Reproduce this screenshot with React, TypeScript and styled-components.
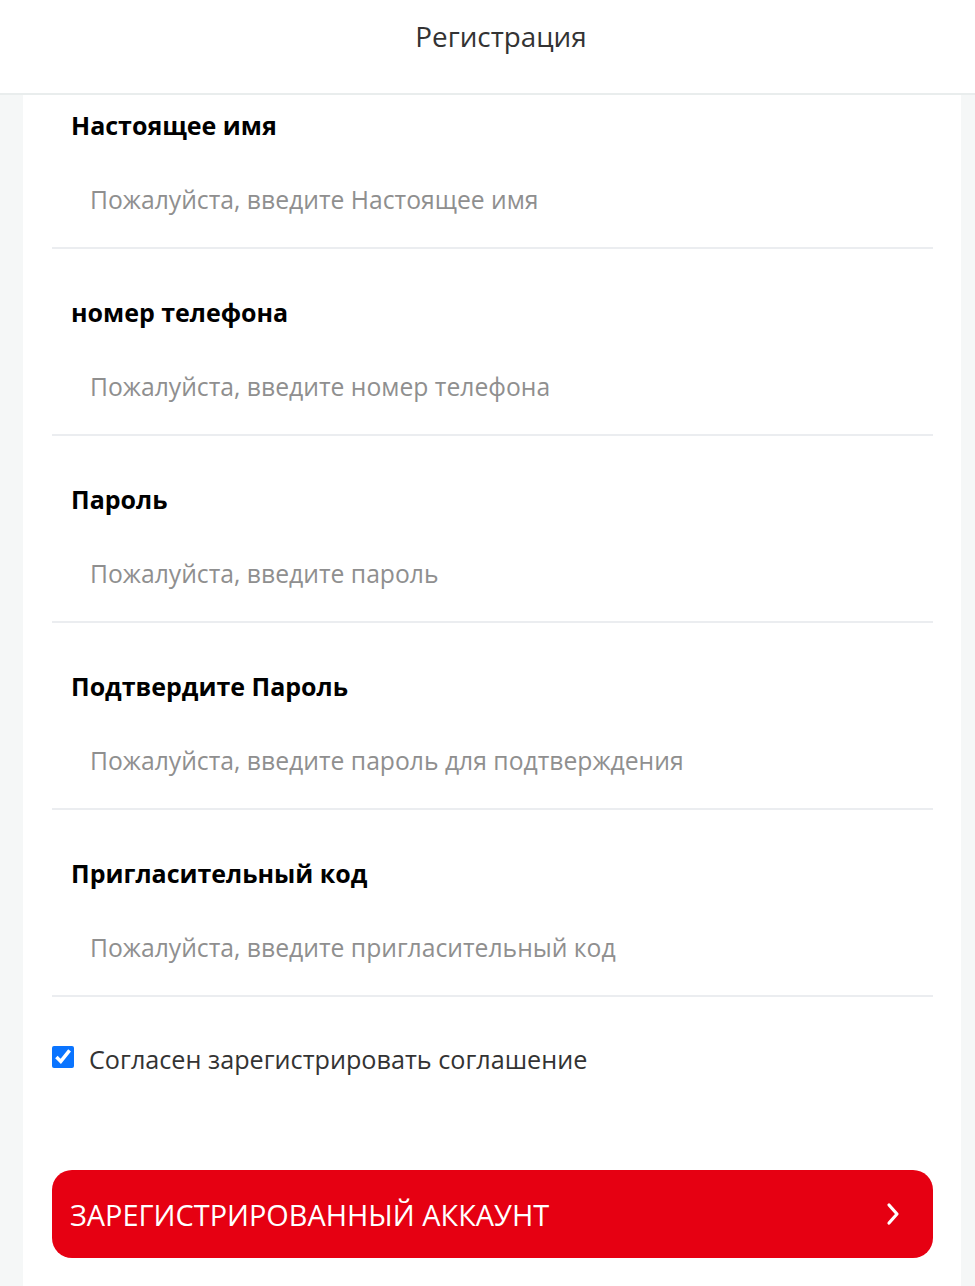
import React from "react";
import styled, { createGlobalStyle } from "styled-components";

const Global = createGlobalStyle`
  html, body { margin: 0; padding: 0; background: #f5f7f7; }
  body { font-family: "Open Sans", "Noto Sans", sans-serif; }
  * { box-sizing: border-box; }
`;

const Page = styled.div`
  width: 975px;
  min-height: 1286px;
  background: #f5f7f7;
  display: flex;
  flex-direction: column;
`;

const Header = styled.header`
  height: 95px;
  background: #fff;
  border-bottom: 2px solid #e9eded;
  display: flex;
  align-items: center;
  justify-content: center;
  padding-left: 27px;
  padding-bottom: 21px;
`;

const Title = styled.h1`
  margin: 0;
  font-size: 27.8px;
  font-weight: 400;
  color: #333;
`;

const Main = styled.main`
  margin: 0 14px 0 23px;
  background: #fff;
  padding: 14px 28px 28px 29px;
  flex: 1;
  display: flex;
  flex-direction: column;
`;

const Field = styled.div<{ $first?: boolean }>`
  margin-top: ${(p) => (p.$first ? 0 : 47)}px;
  border-bottom: 2px solid #ebedf0;
`;

const Label = styled.label`
  display: block;
  padding-left: 19px;
  font-size: 25px;
  line-height: 32px;
  font-weight: 700;
  color: #000;
`;

const Input = styled.input`
  display: block;
  width: 100%;
  margin-top: 14px;
  height: 92px;
  border: none;
  outline: none;
  padding: 0 0 4px 38px;
  font-family: inherit;
  font-size: 24.7px;
  color: #333;
  background: transparent;
  &::placeholder { color: #8f8f8f; }
`;

const Agree = styled.label`
  display: flex;
  align-items: center;
  gap: 15px;
  margin-top: 46px;
  font-size: 25.2px;
  color: #333;
  height: 32px;
`;

const Check = styled.input`
  width: 22px;
  height: 22px;
  margin: 0 0 4px 0;
  accent-color: #0a74ff;
`;

const Submit = styled.button`
  margin-top: 95px;
  height: 88px;
  border: none;
  border-radius: 20px;
  background: #e60012;
  color: #fff;
  font-family: inherit;
  font-size: 28.9px;
  text-transform: uppercase;
  display: flex;
  align-items: center;
  justify-content: space-between;
  padding: 0 32px 0 18px;
  cursor: pointer;
`;

const fields = [
  { label: "Настоящее имя", ph: "Пожалуйста, введите Настоящее имя", type: "text" },
  { label: "номер телефона", ph: "Пожалуйста, введите номер телефона", type: "tel" },
  { label: "Пароль", ph: "Пожалуйста, введите пароль", type: "password" },
  { label: "Подтвердите Пароль", ph: "Пожалуйста, введите пароль для подтверждения", type: "password" },
  { label: "Пригласительный код", ph: "Пожалуйста, введите пригласительный код", type: "text" },
];

export default function App() {
  return (
    <Page>
      <Global />
      <Header>
        <Title>Регистрация</Title>
      </Header>
      <Main>
        {fields.map((f, i) => (
          <Field key={f.label} $first={i === 0}>
            <Label>{f.label}</Label>
            <Input type={f.type} placeholder={f.ph} />
          </Field>
        ))}
        <Agree>
          <Check type="checkbox" defaultChecked />
          Согласен зарегистрировать соглашение
        </Agree>
        <Submit type="button">
          <span>Зарегистрированный аккаунт</span>
          <svg width="16" height="24" viewBox="0 0 16 24" fill="none">
            <path d="M4 3l8 9-8 9" stroke="#fff" strokeWidth="3.2" strokeLinecap="round" strokeLinejoin="round" />
          </svg>
        </Submit>
      </Main>
    </Page>
  );
}
